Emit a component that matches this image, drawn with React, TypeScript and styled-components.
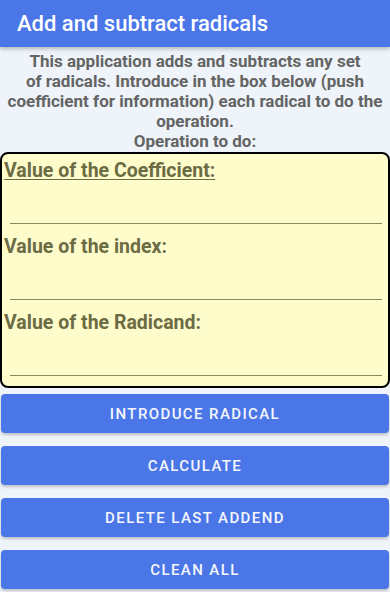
import styled, { createGlobalStyle } from 'styled-components';

// ------------------- Global -------------------

const GlobalStyle = createGlobalStyle`
  html, body {
    margin: 0;
    padding: 0;
    background-color: #eef4fa;
    font-family: Roboto, "Liberation Sans", Arial, sans-serif;
  }
`;

// ------------------- Styled Components -------------------

const Page = styled.div`
  display: flex;
  flex-direction: column;
  width: 390px;
  min-height: 592px;
`;

const Header = styled.header`
  height: 47px;
  display: flex;
  align-items: center;
  padding-left: 17px;
  background-color: #4a76e8;
  box-shadow: 0 2px 4px rgba(0, 0, 0, 0.25);
  color: #ffffff;
  font-size: 22px;
  font-weight: 500;
  position: relative;
  z-index: 1;
`;

const Description = styled.p`
  margin: 4px 0 0;
  padding: 0;
  text-align: center;
  color: #646464;
  font-size: 17px;
  font-weight: 700;
  line-height: 20px;
`;

const OperationBox = styled.div`
  display: flex;
  flex-direction: column;
  gap: 11px;
  margin-top: 1px;
  padding: 5px 0 10px;
  background-color: #fffccc;
  border: 2px solid #000;
  border-radius: 8px;
`;

const Field = styled.div`
  display: flex;
  flex-direction: column;
`;

const FieldLabel = styled.label<{ underline?: boolean }>`
  color: #6b6b44;
  font-size: 19.5px;
  font-weight: 700;
  line-height: 23px;
  padding-left: 2px;
  text-decoration: ${({ underline }) => (underline ? 'underline' : 'none')};
  text-underline-offset: 2px;
`;

const FieldInput = styled.input`
  height: 41px;
  margin: 0 6px 0 8px;
  padding: 0;
  background: transparent;
  border: none;
  border-bottom: 1px solid #8a8a5c;
  outline: none;
  font-size: 18px;
  font-family: inherit;
`;

const ButtonList = styled.div`
  display: flex;
  flex-direction: column;
  gap: 13px;
  margin-top: 6px;
  padding: 0 1px;
`;

const ActionButton = styled.button`
  height: 39px;
  border: none;
  border-radius: 4px;
  background-color: #4a76e8;
  box-shadow: 0 2px 3px rgba(0, 0, 0, 0.2);
  color: #f4f6fc;
  font-family: Roboto, "Liberation Sans", Arial, sans-serif;
  font-size: 15px;
  font-weight: 500;
  letter-spacing: 1.4px;
  text-transform: uppercase;
  cursor: pointer;
`;

// ------------------- App -------------------

const fields = [
    { label: 'Value of the Coefficient:', underline: true },
    { label: 'Value of the index:', underline: false },
    { label: 'Value of the Radicand:', underline: false },
];

const actions = ['Introduce radical', 'Calculate', 'Delete last addend', 'Clean all'];

export default function App() {
    return (
        <>
            <GlobalStyle />
            <Page>
                <Header>Add and subtract radicals</Header>
                <Description>
                    This application adds and subtracts any set
                    <br />
                    of radicals. Introduce in the box below (push coefficient for information) each radical to do the
                    operation.
                    <br />
                    Operation to do:
                </Description>
                <OperationBox>
                    {fields.map(f => (
                        <Field key={f.label}>
                            <FieldLabel underline={f.underline}>{f.label}</FieldLabel>
                            <FieldInput type="text" />
                        </Field>
                    ))}
                </OperationBox>
                <ButtonList>
                    {actions.map(a => (
                        <ActionButton key={a}>{a}</ActionButton>
                    ))}
                </ButtonList>
            </Page>
        </>
    );
}
